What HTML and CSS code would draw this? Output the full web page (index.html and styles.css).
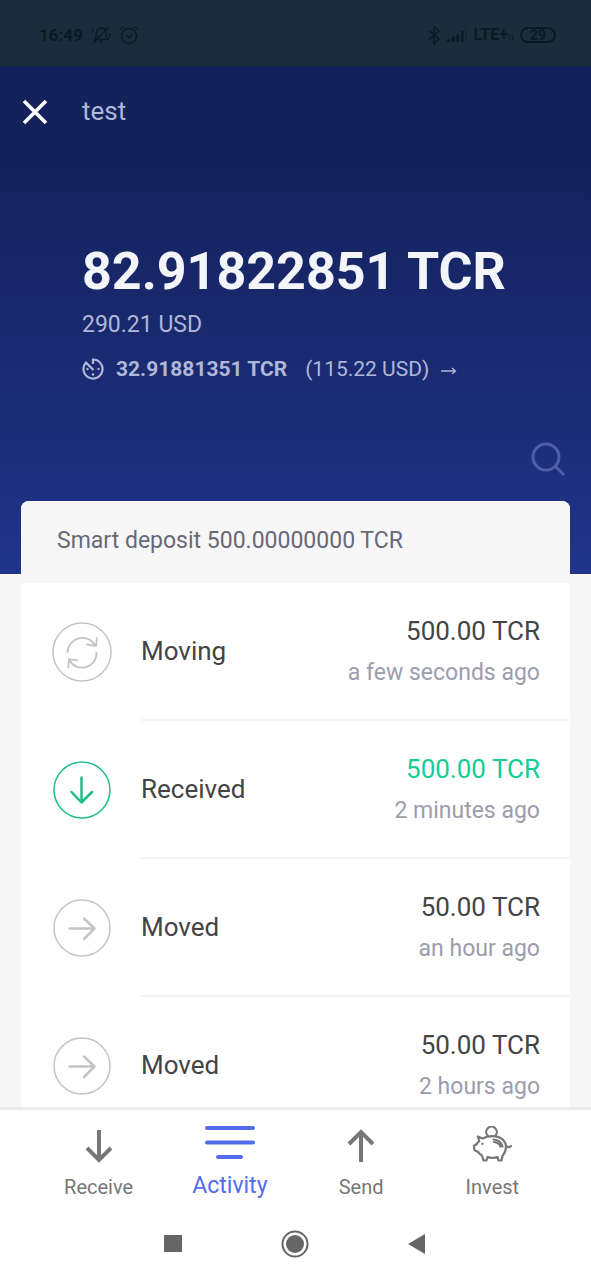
FILE: index.html
```html
<!DOCTYPE html>
<html lang="en">
<head>
<meta charset="utf-8">
<meta name="viewport" content="width=device-width, initial-scale=1">
<title>Wallet activity</title>
<link rel="stylesheet" href="styles.css">
</head>
<body>
<div class="screen">
  <div class="status">
    <div class="status-group">
      <span class="clock">16:49</span>
      <svg width="20" height="20" viewBox="0 0 20 20" class="line"><path d="M4 14.500h13c-1.500-1.500-2-3-2-6.500 0-3-2-5-4.500-5S5.500 5 5.500 8c0 3.500-.5 5-1.500 6.500zM8.500 17h3M2 18L18 2M1 8c0-2 .5-3 1.500-4M19 8c0 2 .5 3-1 5"/></svg>
      <svg width="20" height="20" viewBox="0 0 20 20" class="line"><circle cx="10" cy="11" r="7.500"/><path d="M7 10l3 2.500 3-2.500M1 4.500L4.500 1.500M15.500 1.500L19 4.500"/></svg>
    </div>
    <div class="status-group status-right">
      <svg width="14" height="20" viewBox="0 0 14 20" class="line"><path d="M2 5.500l10 8.500-5 4.500v-17l5 4.500-10 8.500"/></svg>
      <svg width="20" height="14" viewBox="0 0 20 14" class="solid"><path d="M0 11h3v3H0zM5 8.500h2.500V14H5zM9.500 6H12v8H9.500zM14 3h2.500v11H14z"/><path opacity=".25" d="M18 0h2v14h-2z"/></svg>
      <span class="network">LTE+<svg width="6" height="8" viewBox="0 0 6 8" class="solid updown"><path opacity=".6" d="M1 2h1.300v6H1zM4 2h1.300v6H4z"/></svg></span>
      <span class="battery">29</span>
    </div>
  </div>

  <main class="content">
    <header class="hero">
      <div class="title-row">
        <button class="icon-button" aria-label="Close"><svg width="26" height="26" viewBox="0 0 26 26"><path d="M2 2l22 22M24 2L2 24" fill="none" stroke="#fff" stroke-width="3.600"/></svg></button>
        <h1 class="title">test</h1>
      </div>
      <div class="balance">
        <div class="amount">82.91822851 TCR</div>
        <div class="fiat">290.21 USD</div>
        <a class="available" href="#available">
          <svg width="22" height="22" viewBox="0 0 22 22"><path d="M11 6V1.500A9.500 9.500 0 1 1 4 4.600L11.500 12" fill="none" stroke="currentColor" stroke-width="2.200"/><g fill="currentColor"><circle cx="5.500" cy="11" r="1.200"/><circle cx="16.500" cy="11" r="1.200"/><circle cx="11" cy="16.500" r="1.200"/></g></svg>
          <strong>32.91881351 TCR</strong>
          <span>(115.22 USD)</span>
          <svg class="arrow" width="16" height="10" viewBox="0 0 16 10"><path d="M0 5h14.500M11 2l3.500 3L11 8" fill="none" stroke="currentColor" stroke-width="1.300"/></svg>
        </a>
      </div>
      <button class="icon-button search" aria-label="Search"><svg width="34" height="34" viewBox="0 0 34 34" fill="none" stroke="#505fa5" stroke-width="3"><circle cx="15" cy="15" r="13"/><path d="M24 24l9 9"/></svg></button>
    </header>

    <section class="card">
      <h2 class="card-title">Smart deposit 500.00000000 TCR</h2>
      <ul class="list">
        <li class="item">
          <svg class="badge" viewBox="0 0 60 60"><circle cx="30" cy="30" r="29"/><g stroke-width="1.800"><path d="M15.500 30.500A15 15 0 0 1 43.500 23.500M45 15.500L44 24L34.500 22.500M44.500 30A14.500 14.500 0 0 1 17 37.500M16.200 46L17 37.200L26 38.500"/></g></svg>
          <div class="row"><span class="kind">Moving</span><div class="figures"><span class="sum">500.00 TCR</span><time class="when">a few seconds ago</time></div></div>
        </li>
        <li class="item incoming">
          <svg class="badge" viewBox="0 0 60 60"><circle cx="30" cy="30" r="28"/><path class="thick" d="M29.500 17.500V42M19.500 32L29.500 42.500L40 32"/></svg>
          <div class="row"><span class="kind">Received</span><div class="figures"><span class="sum">500.00 TCR</span><time class="when">2 minutes ago</time></div></div>
        </li>
        <li class="item">
          <svg class="badge" viewBox="0 0 60 60"><circle cx="30" cy="30" r="28"/><path class="thick" d="M17.500 30.500H42M32 20.500L42.500 30.500L32 41"/></svg>
          <div class="row"><span class="kind">Moved</span><div class="figures"><span class="sum">50.00 TCR</span><time class="when">an hour ago</time></div></div>
        </li>
        <li class="item">
          <svg class="badge" viewBox="0 0 60 60"><circle cx="30" cy="30" r="28"/><path class="thick" d="M17.500 30.500H42M32 20.500L42.500 30.500L32 41"/></svg>
          <div class="row"><span class="kind">Moved</span><div class="figures"><span class="sum">50.00 TCR</span><time class="when">2 hours ago</time></div></div>
        </li>
      </ul>
    </section>
  </main>

  <nav class="tabs">
    <button class="tab"><svg width="50" height="40" viewBox="0 0 50 40"><path d="M25 4v30M13 22l12 12 12-12" fill="none" stroke="currentColor" stroke-width="4"/></svg><span>Receive</span></button>
    <button class="tab active"><svg width="50" height="40" viewBox="0 0 50 40"><path d="M2 2h46M2 16.500h46M13 31h23" fill="none" stroke="currentColor" stroke-width="4" stroke-linecap="round"/></svg><span>Activity</span></button>
    <button class="tab"><svg width="50" height="40" viewBox="0 0 50 40"><path d="M25 36V6M13 18L25 6l12 12" fill="none" stroke="currentColor" stroke-width="4"/></svg><span>Send</span></button>
    <button class="tab"><svg width="50" height="40" viewBox="0 0 50 40" fill="none" stroke="currentColor" stroke-width="2.200" stroke-linecap="round" stroke-linejoin="round"><path d="M20.500 9.500A5.300 5.300 0 1 1 28.500 9.500"/><path d="M15.500 12.500c3-1.500 6-2.300 10-2.300 8.500 0 13.500 5 13.500 10.800 0 4-2 7-3.500 9l-1 4.500h-3l-1-3.500c-3 1-7 1-10 0l-1 3.500h-3l-1.500-5c-2-1-3-2.500-4-3.500l-3.500-2-.7-4 3-2c.8-1.500 1.500-2.200 2.500-3l-1.500-4.500z"/><path d="M26.500 13.500c4.500.3 8 3 9 7M27 16c3 .3 5.500 2 6.500 4.500M39.500 20c1.500 1.700 3 1.500 4.500 0"/><path d="M15.500 17.500v.5"/></svg><span>Invest</span></button>
  </nav>

  <nav class="system">
    <button class="system-button" aria-label="Recent apps"><svg width="28" height="28" viewBox="0 0 28 28"><path d="M5 5h18v17H5z" fill="#666"/></svg></button>
    <button class="system-button" aria-label="Home"><svg width="28" height="28" viewBox="0 0 28 28"><circle cx="14" cy="14" r="12.500" fill="none" stroke="#666" stroke-width="2"/><circle cx="14" cy="14" r="9" fill="#666"/></svg></button>
    <button class="system-button" aria-label="Back"><svg width="28" height="28" viewBox="0 0 28 28"><path d="M4 14L21 4v20z" fill="#666"/></svg></button>
  </nav>
</div>
</body>
</html>
```
FILE: styles.css
```css
* {
  box-sizing: border-box;
}

body {
  margin: 0;
  font-family: Roboto, "Noto Sans", sans-serif;
  color: #444;
  background: #f7f7f7;
}

button {
  border: 0;
  padding: 0;
  background: none;
  font: inherit;
  color: inherit;
}

svg {
  display: block;
  flex: none;
}

.screen {
  display: flex;
  flex-direction: column;
  height: 100vh;
}

.status {
  display: flex;
  flex: none;
  align-items: center;
  justify-content: space-between;
  height: 66px;
  padding: 3px 35px 0 39px;
  background: #1b2d3b;
  color: #0c1923;
}

.status-group {
  display: flex;
  align-items: center;
  gap: 8px;
}

.status-right {
  gap: 6px;
}

.clock {
  font-size: 17px;
  font-weight: 700;
}

.network {
  display: flex;
  align-items: baseline;
  font-size: 16px;
  font-weight: 700;
}

.battery {
  width: 36px;
  border: 2px solid #0c1923;
  border-radius: 8px;
  font-size: 14px;
  font-weight: 700;
  line-height: 12px;
  text-align: center;
}

.line {
  fill: none;
  stroke: currentColor;
  stroke-width: 1.5;
}

.solid {
  fill: currentColor;
}

.content {
  flex: 1;
  min-height: 0;
  overflow: hidden;
}

.hero {
  display: flex;
  flex-direction: column;
  padding: 24px 22px 98px;
  background: linear-gradient(#14225c 20%, #20348a);
  color: #b1b7d6;
}

.title-row {
  display: flex;
  align-items: center;
  gap: 34px;
  height: 44px;
}

.title {
  margin: 0;
  padding-bottom: 2px;
  font-size: 26px;
  font-weight: 400;
}

.balance {
  padding: 106px 0 0 60px;
}

.amount {
  font-size: 52px;
  font-weight: 700;
  line-height: 64px;
  color: #f4f5f9;
}

.fiat {
  margin-top: 6px;
  font-size: 23px;
  line-height: 30px;
}

.available {
  display: flex;
  align-items: center;
  gap: 12px;
  margin-top: 14px;
  font-size: 21px;
  line-height: 30px;
  color: inherit;
  text-decoration: none;
}

.available strong {
  margin-right: 6px;
  font-weight: 700;
}

.arrow {
  margin-top: 4px;
}

.search {
  align-self: flex-end;
  margin: 58px 4px 0 0;
}

.card {
  margin: -73px 21px 0;
  border-radius: 8px 8px 0 0;
  overflow: hidden;
  background: #fff;
}

.card-title {
  margin: 0;
  padding: 25px 36px 27px;
  background: #f7f7f7;
  font-size: 23px;
  font-weight: 400;
  line-height: 30px;
  color: #696878;
}

.list {
  margin: 0;
  padding: 0;
  list-style: none;
}

.item {
  display: flex;
  align-items: center;
  gap: 29px;
  padding-left: 31px;
}

.badge {
  width: 60px;
  height: 60px;
  fill: none;
  stroke: #c4c4c4;
  stroke-width: 1.5;
}

.thick {
  stroke-width: 2.5;
  stroke-linecap: round;
  stroke-linejoin: round;
}

.incoming .badge {
  stroke: #1dbf86;
}

.incoming .sum {
  color: #12cd95;
}

.row {
  display: flex;
  flex: 1;
  align-items: center;
  justify-content: space-between;
  padding: 27px 30px 27px 0;
  border-bottom: 2px solid #f4f4f4;
  font-size: 26px;
}

.figures {
  display: flex;
  flex-direction: column;
  align-items: flex-end;
  gap: 6px;
  padding-bottom: 4px;
}

.sum {
  line-height: 42px;
}

.when {
  font-size: 23px;
  line-height: 30px;
  color: #9d9cac;
}

.tabs {
  display: grid;
  flex: none;
  grid-template-columns: repeat(4, 1fr);
  padding: 16px 33px 6px;
  border-top: 3px solid #ebebeb;
  background: #fff;
}

.tab {
  display: flex;
  flex-direction: column;
  align-items: center;
  gap: 6px;
  font-size: 20px;
  line-height: 30px;
  color: #777;
}

.active {
  font-size: 23px;
  line-height: 28px;
  color: #526cec;
}

.system {
  display: grid;
  flex: none;
  grid-template-columns: repeat(3, 1fr);
  justify-items: center;
  align-items: center;
  height: 72px;
  padding: 0 112px;
  background: #fff;
}
```
